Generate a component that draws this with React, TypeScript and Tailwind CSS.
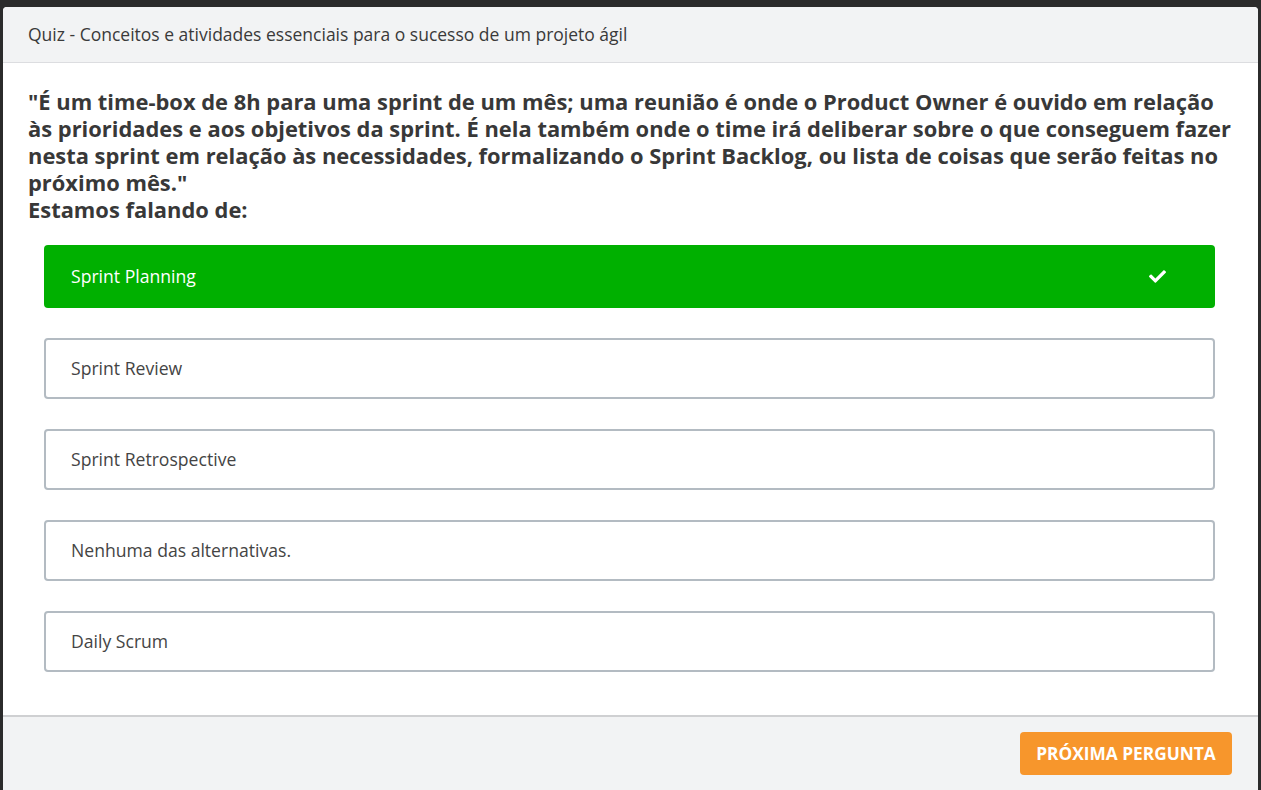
import { FaCheck } from "react-icons/fa";

const options = [
  { label: "Sprint Planning", correct: true },
  { label: "Sprint Review", correct: false },
  { label: "Sprint Retrospective", correct: false },
  { label: "Nenhuma das alternativas.", correct: false },
  { label: "Daily Scrum", correct: false },
];

const App = () => {
  return (
    <div className="h-[790px] overflow-hidden bg-[#2b2b2b] px-[3px] pt-[7px] font-['Open_Sans',sans-serif] text-[#333]">
      <div className="flex h-full flex-col overflow-hidden rounded-t-[4px] bg-white">
        <div className="flex h-[56px] shrink-0 items-center border-b border-[#dcdde0] bg-[#f2f3f4] px-[25px] text-[17.5px] text-[#3a3a3a]">
          Quiz - Conceitos e atividades essenciais para o sucesso de um projeto ágil
        </div>

        <div className="px-[25px] pb-[43px] pt-[25px]">
          <p className="text-[21.9px] font-bold leading-[27px] text-[#383838]">
            "É um time-box de 8h para uma sprint de um mês; uma reunião é onde o
            Product Owner é ouvido em relação às prioridades e aos objetivos da
            sprint. É nela também onde o time irá deliberar sobre o que
            conseguem fazer nesta sprint em relação às necessidades,
            formalizando o Sprint Backlog, ou lista de coisas que serão feitas
            no próximo mês."
            <br />
            Estamos falando de:
          </p>

          <div className="ml-[16px] mr-[18px] mt-[22px] flex flex-col gap-[30px]">
            {options.map((option) =>
              option.correct ? (
                <div
                  key={option.label}
                  className="flex h-[63px] items-center justify-between rounded-[4px] bg-[#00b000] pl-[27px] pr-[49px] text-[17.6px] text-white"
                >
                  <span>{option.label}</span>
                  <FaCheck className="h-[17px] w-[17px]" />
                </div>
              ) : (
                <div
                  key={option.label}
                  className="flex h-[61px] items-center rounded-[4px] border-2 border-[#b3bbc2] pl-[25px] text-[17.6px] text-[#444]"
                >
                  {option.label}
                </div>
              ),
            )}
          </div>
        </div>

        <div className="flex flex-1 justify-end border-t-2 border-[#cfd0d2] bg-[#f2f3f4] pr-[26px] pt-[15px]">
          <button
            type="button"
            className="h-[43px] w-[212px] rounded-[4px] bg-[#f7962c] text-[17.3px] font-bold uppercase text-white"
          >
            Próxima pergunta
          </button>
        </div>
      </div>
    </div>
  );
};

export default App;
